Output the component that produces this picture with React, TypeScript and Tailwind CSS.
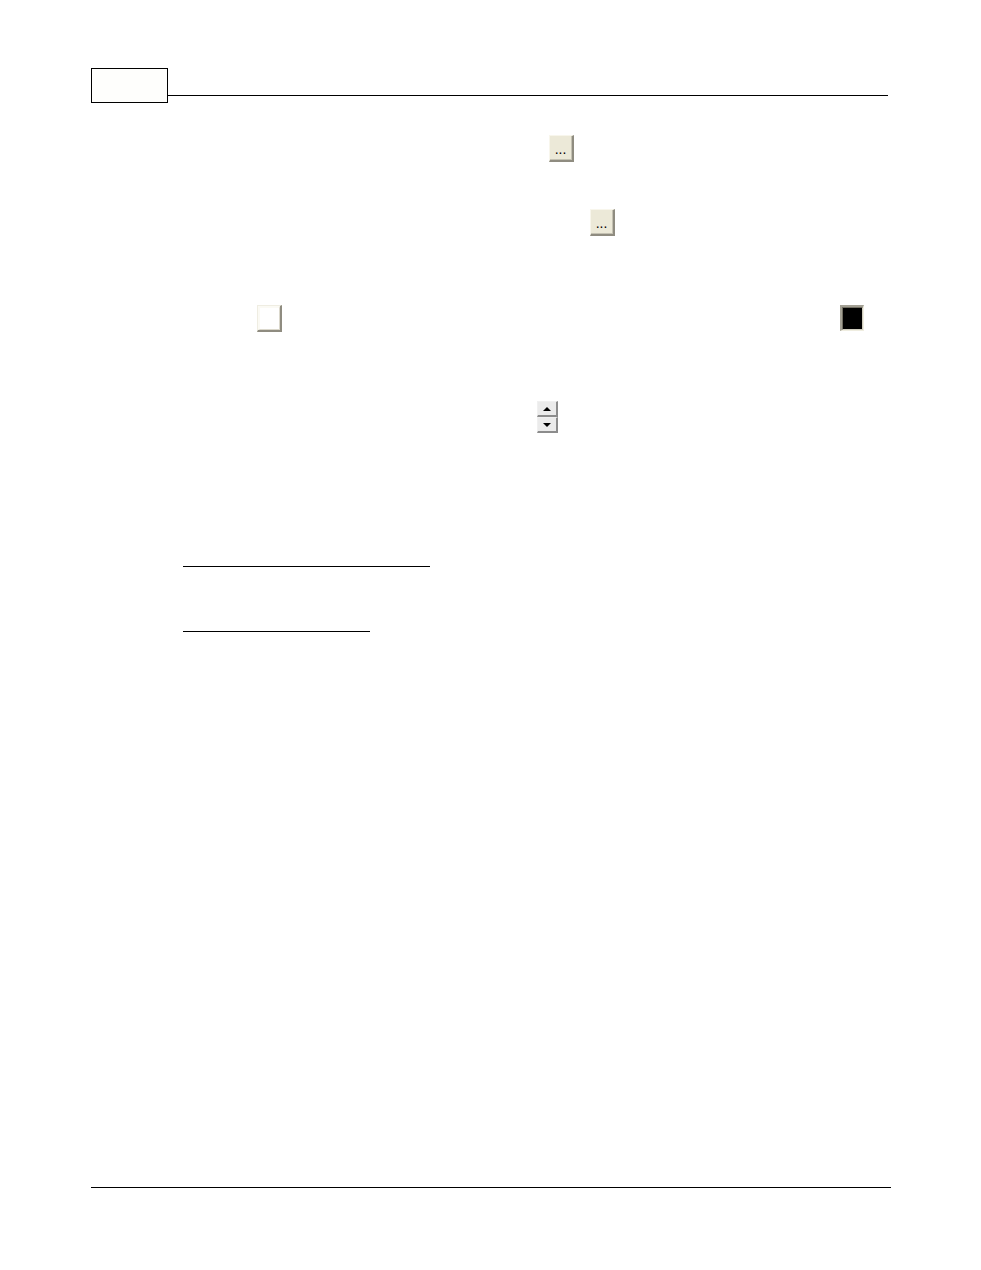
import { useState } from 'react'

function BrowseButton({ label }: { label: string }) {
  return (
    <button type="button" aria-label={label} className="h-[27px] w-[25px] border-t border-r-2 border-b-2 border-l border-t-[#f8f6ec] border-r-[#8f8c80] border-b-[#8f8c80] border-l-[#f8f6ec]">
      <span className="flex h-full items-end justify-center border-r border-b border-[#c4c1b2] bg-[#ece9d8] pb-0.5 text-sm leading-4 text-black">...</span>
    </button>
  )
}

function Arrow({ up }: { up?: boolean }) {
  return (
    <svg viewBox="0 0 8 4" className="h-1 w-2" fill="#000">
      {up ? <path d="M4 0L8 4H0Z" /> : <path d="M0 0H8L4 4Z" />}
    </svg>
  )
}

const spinClass = 'flex h-4 w-[21px] items-center justify-center border-t border-r-2 border-b-2 border-l border-t-[#f0f0f0] border-r-[#8c8c8c] border-b-[#8c8c8c] border-l-[#f0f0f0] bg-[#ebebeb]'

export default function App() {
  const [pressed, setPressed] = useState(true)
  const [, setValue] = useState(0)

  return (
    <div className="flex min-h-screen flex-col bg-white pt-[68px] pr-[90px] pb-[82px] pl-[91px] font-['Liberation_Sans',sans-serif]">
      <header className="mr-[3px] flex">
        <div className="h-[35px] w-[77px] border border-black bg-[#fefefc]" />
        <div className="h-7 flex-1 border-b border-black" />
      </header>

      <main className="flex flex-1 flex-col pt-8">
        <div className="pl-[458px]">
          <BrowseButton label="Browse file" />
        </div>
        <div className="mt-[47px] pl-[499px]">
          <BrowseButton label="Browse folder" />
        </div>

        <div className="mt-[69px] flex justify-between pr-[27px] pl-[166px]">
          {/* raised and sunken colour swatches */}
          <button type="button" aria-label="White" className="h-[27px] w-[25px] border-t border-r-2 border-b-2 border-l border-t-[#efede2] border-r-[#8f8c80] border-b-[#8f8c80] border-l-[#efede2]">
            <span className="block h-full border-t-2 border-r border-b border-l-2 border-t-[#fbfaf4] border-r-[#dbd8cc] border-b-[#dbd8cc] border-l-[#fbfaf4] bg-white" />
          </button>
          <button type="button" aria-label="Black" aria-pressed={pressed} onClick={() => setPressed(!pressed)} className="h-[26px] w-[24px] border-t-2 border-r border-b border-l-2 border-t-[#a3a094] border-r-[#efede0] border-b-[#efede0] border-l-[#a3a094]">
            <span className="block h-full border-t border-r border-b border-l border-t-[#716e62] border-r-[#d0cdbf] border-b-[#d0cdbf] border-l-[#716e62] bg-black" />
          </button>
        </div>

        <div className="mt-[69px] flex flex-col pl-[446px]">
          <button type="button" aria-label="Increase" onClick={() => setValue((v) => v + 1)} className={spinClass}>
            <Arrow up />
          </button>
          <button type="button" aria-label="Decrease" onClick={() => setValue((v) => v - 1)} className={spinClass}>
            <Arrow />
          </button>
        </div>

        <div className="mt-[133px] pl-[92px]">
          <hr className="w-[247px] border-black" />
          <hr className="mt-16 w-[187px] border-black" />
        </div>
      </main>

      <footer className="border-t border-black" />
    </div>
  )
}
